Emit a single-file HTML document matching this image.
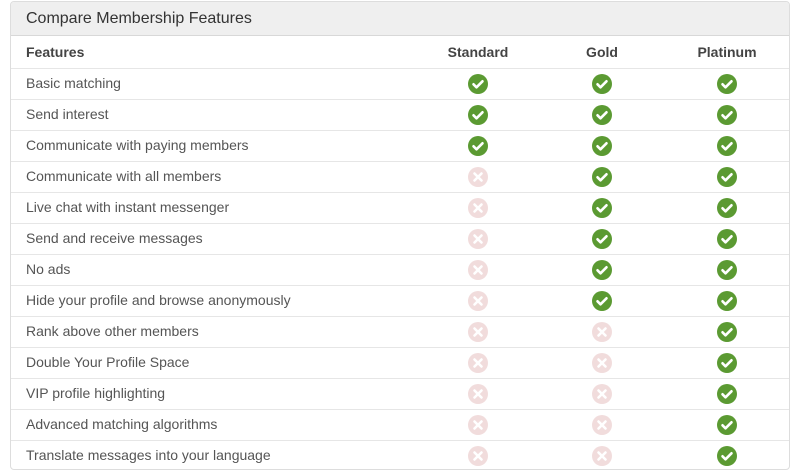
<!DOCTYPE html>
<html><head><meta charset="utf-8"><style>
body{margin:0;background:#fff;font-family:"Liberation Sans",sans-serif;}
.panel{position:absolute;left:10px;top:1px;width:778px;height:467px;border:1px solid #ddd;border-radius:4px;overflow:hidden;}
.hd{height:33px;background:#efefef;border-bottom:1px solid #d8d8d8;font-size:16px;color:#333;line-height:33px;padding-left:15px;}
.row{position:relative;height:30px;border-bottom:1px solid #e6e6e6;font-size:14px;color:#555;line-height:29px;}
.row .l{position:absolute;left:15px;}
.row .c{position:absolute;top:5px;width:20px;height:20px;}
.th{font-weight:bold;color:#444;height:32px;line-height:32px;}
.th span{position:absolute;transform:translateX(-50%);}
</style></head><body>
<svg width="0" height="0" style="position:absolute">
<defs>
<symbol id="ok" viewBox="0 0 20 20"><circle cx="10" cy="10" r="10" fill="#5b9a32"/><path d="M5.5 10.3l3 3 6-6" stroke="#fff" stroke-width="2.6" fill="none" stroke-linecap="round" stroke-linejoin="round"/></symbol>
<symbol id="no" viewBox="0 0 20 20"><circle cx="10" cy="10" r="10" fill="#f1dcdc"/><path d="M6.5 6.5l7 7M13.5 6.5l-7 7" stroke="#fff" stroke-width="2.6" stroke-linecap="round"/></symbol>
</defs></svg>
<div class="panel">
<div class="hd">Compare Membership Features</div>
<div class="row th"><span class="l" style="transform:none">Features</span><span style="left:467px">Standard</span><span style="left:591px">Gold</span><span style="left:716px">Platinum</span></div>
<div id="rows"></div>
</div>
<script>
var d=[["Basic matching",1,1,1],["Send interest",1,1,1],["Communicate with paying members",1,1,1],["Communicate with all members",0,1,1],["Live chat with instant messenger",0,1,1],["Send and receive messages",0,1,1],["No ads",0,1,1],["Hide your profile and browse anonymously",0,1,1],["Rank above other members",0,0,1],["Double Your Profile Space",0,0,1],["VIP profile highlighting",0,0,1],["Advanced matching algorithms",0,0,1],["Translate messages into your language",0,0,1]];
var x=[457,581,706],h="";
d.forEach(function(r){h+='<div class="row"><span class="l">'+r[0]+'</span>';for(var i=0;i<3;i++)h+='<svg class="c" style="left:'+x[i]+'px"><use href="#'+(r[i+1]?'ok':'no')+'"/></svg>';h+='</div>';});
document.getElementById('rows').innerHTML=h;
</script>
</body></html>
